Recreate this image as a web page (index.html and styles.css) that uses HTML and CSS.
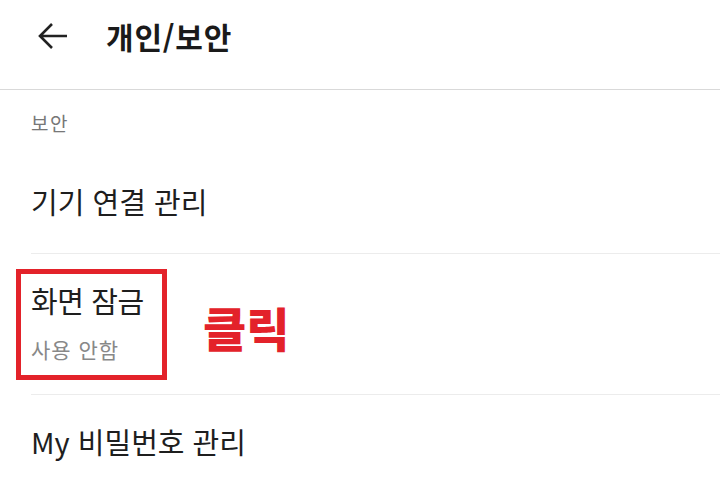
FILE: index.html
```
<!DOCTYPE html>
<html lang="ko">
<head>
<meta charset="utf-8">
<link rel="stylesheet" href="styles.css">
</head>
<body>
<header class="appbar">
  <svg class="back" width="31" height="28" viewBox="0 0 31 28" aria-hidden="true">
    <path d="M30 14 H3 M15 2 L3 14 L15 26" fill="none" stroke="#222" stroke-width="2.6" stroke-linecap="butt" stroke-linejoin="miter"/>
  </svg>
  <h1 class="title">개인/보안</h1>
</header>
<main class="content">
  <div class="section-label">보안</div>
  <ul class="list">
    <li class="item item-first"><span class="item-title">기기 연결 관리</span></li>
    <li class="item item-two">
      <div class="item-title">화면 잠금</div>
      <div class="item-sub">사용 안함</div>
      <div class="highlight"></div>
      <div class="callout">클릭</div>
    </li>
    <li class="item item-last"><span class="item-title">My 비밀번호 관리</span></li>
  </ul>
</main>
</body>
</html>
```
FILE: styles.css
```
html, body {
  margin: 0;
  padding: 0;
  background: #ffffff;
}
body {
  font-family: "Noto Sans CJK KR", "Noto Sans", sans-serif;
  color: #1e1e1e;
  width: 720px;
  height: 477px;
  overflow: hidden;
}
.appbar {
  box-sizing: border-box;
  height: 90px;
  padding: 0 0 17px 37px;
  display: flex;
  align-items: center;
  border-bottom: 1px solid #d9d9d9;
}
.back {
  display: block;
  flex: none;
}
.title {
  margin: 0 0 0 38px;
  font-size: 30px;
  font-weight: 700;
  line-height: 40px;
  letter-spacing: 0.8px;
  color: #1a1a1a;
}
.content {
  padding-left: 31px;
}
.section-label {
  padding-top: 22px;
  font-size: 19px;
  line-height: 22px;
  letter-spacing: 1.5px;
  color: #777777;
}
.list {
  list-style: none;
  margin: 0;
  padding: 0;
}
.item {
  border-bottom: 1px solid #ececec;
  position: relative;
}
.item-title {
  display: block;
  font-size: 29px;
  line-height: 40px;
  color: #1e1e1e;
}
.item-first {
  padding: 47px 0 32px;
}
.item-two {
  padding: 26px 0 30px;
}
.item-two .item-title {
  letter-spacing: -0.4px;
}
.item-sub {
  margin-top: 14px;
  font-size: 21px;
  line-height: 30px;
  letter-spacing: 1px;
  color: #888888;
}
.item-last {
  padding: 26px 0 30px;
  border-bottom: none;
}
.highlight {
  position: absolute;
  left: -15px;
  top: 15px;
  width: 151px;
  height: 111px;
  box-sizing: border-box;
  border: 5px solid #e3222a;
}
.callout {
  position: absolute;
  left: 172px;
  top: 49px;
  font-size: 47px;
  line-height: 47px;
  font-weight: 900;
  color: #e3222a;
}
```
